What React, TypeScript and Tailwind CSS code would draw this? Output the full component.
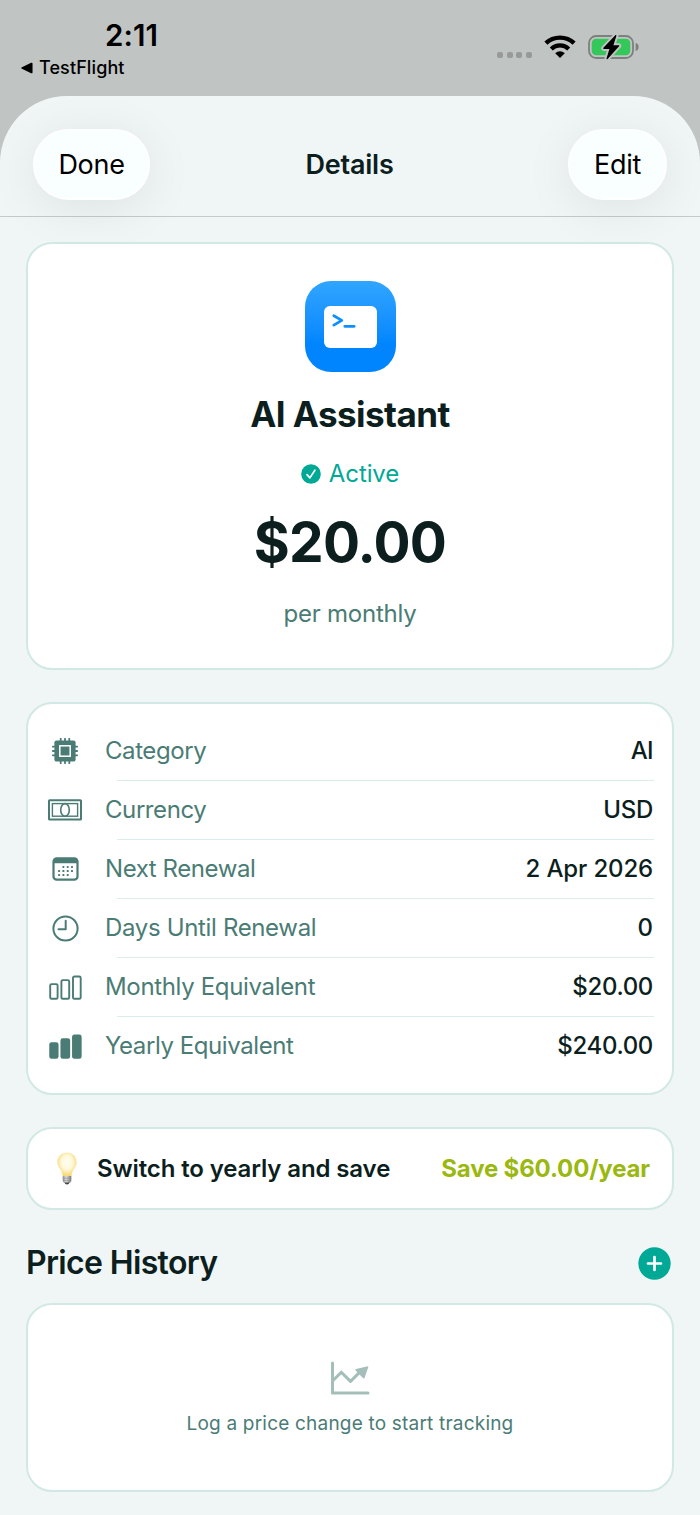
import type { ReactNode } from "react";

interface DetailRow {
  label: string;
  value: string;
  icon: ReactNode;
  labelClass: string;
  valueClass: string;
}

function WifiIcon() {
  return (
    <svg width="32" height="24" viewBox="0 0 32 24" fill="none">
      <path d="M1.900 9.200C9.600 1.700 22.400 1.700 30.100 9.200" stroke="#000" strokeWidth="4.400" />
      <path d="M7.300 14.900c4.900-4.700 12.500-4.700 17.400 0" stroke="#000" strokeWidth="4.200" />
      <path d="M11.200 19.200c2.800-2.700 6.800-2.700 9.600 0L16 24z" fill="#000" />
    </svg>
  );
}

function BatteryIcon() {
  return (
    <svg width="52" height="26" viewBox="0 0 52 26" fill="none">
      <rect x="1" y="2" width="44" height="22" rx="7.200" stroke="#7d807f" strokeWidth="1.800" />
      <path d="M47.600 9c2.200.6 3 2 3 4s-.8 3.400-3 4z" fill="#7d807f" />
      <rect x="3.700" y="4.700" width="38.600" height="16.600" rx="4.600" fill="#34c759" />
      <path
        d="M27.300 1.200 15.400 13.800c-.5.600-.2 1.100.5 1.100h5.500l-2.900 9.500c-.2.800.6 1.100 1.100.5l11.500-12.600c.5-.6.2-1.100-.5-1.100h-5.200l3-9.500c.2-.8-.6-1.100-1.100-.5z"
        fill="#000"
        stroke="#c0c4c3"
        strokeWidth="4"
        paintOrder="stroke"
      />
    </svg>
  );
}

function ChipIcon() {
  const pins = [8.7, 13, 17.3];
  return (
    <svg width="26" height="26" viewBox="0 0 26 26" fill="none" stroke="currentColor">
      {pins.map((p) => (
        <path key={p} d={`M${p} .8v24.400M.8 ${p}h24.400`} strokeWidth="1.800" strokeLinecap="round" />
      ))}
      <rect x="2.400" y="2.400" width="21.200" height="21.200" rx="2.200" fill="currentColor" stroke="none" />
      <rect x="7.800" y="7.800" width="10.400" height="10.400" stroke="#fff" strokeWidth="1.500" />
    </svg>
  );
}

function BanknoteIcon() {
  return (
    <svg width="34" height="22" viewBox="0 0 34 22" fill="none" stroke="currentColor">
      <rect x="1" y="1.200" width="32" height="19.400" rx=".6" strokeWidth="2" />
      <rect x="4.400" y="4.600" width="25.200" height="12.600" strokeWidth="1.400" />
      <ellipse cx="17" cy="10.900" rx="4.300" ry="6.300" strokeWidth="1.600" />
    </svg>
  );
}

function CalendarIcon() {
  const dots = [
    [11.4, 9.9], [15.7, 9.9], [20, 9.9],
    [7.1, 14], [11.4, 14], [15.7, 14], [20, 14],
    [7.1, 18.1], [11.4, 18.1], [15.7, 18.1],
  ];
  return (
    <svg width="27" height="24" viewBox="0 0 27 24" fill="none">
      <rect x="1.500" y="1.300" width="24" height="21.400" rx="3.200" stroke="currentColor" strokeWidth="2.200" />
      <path d="M1.500 6.300V4.500c0-2 1.200-3.200 3.200-3.200h17.600c2 0 3.200 1.200 3.200 3.200v1.800z" fill="currentColor" />
      {dots.map(([x, y]) => (
        <rect key={`${x}-${y}`} x={x - 1} y={y - 1} width="2" height="2" rx=".6" fill="currentColor" />
      ))}
    </svg>
  );
}

function ClockIcon() {
  return (
    <svg width="27" height="27" viewBox="0 0 27 27" fill="none" stroke="currentColor" strokeWidth="2">
      <circle cx="13.500" cy="13.500" r="12.100" />
      <path d="M13.700 5.800v8.400H6.500" strokeLinecap="round" strokeLinejoin="round" />
    </svg>
  );
}

function BarsIcon({ filled }: { filled?: boolean }) {
  return (
    <svg
      width="34"
      height="25"
      viewBox="0 0 34 25"
      fill={filled ? "currentColor" : "none"}
      stroke="currentColor"
      strokeWidth="1.900"
    >
      <rect x="2.200" y="9.100" width="7.400" height="14.700" rx="1.400" />
      <rect x="13.400" y="5.100" width="7.800" height="18.700" rx="1.400" />
      <rect x="25" y="1.500" width="7.700" height="22.300" rx="1.400" />
    </svg>
  );
}

function BulbIcon() {
  return (
    <svg width="20" height="33" viewBox="0 0 20 33" fill="none">
      <defs>
        <radialGradient id="glass" cx=".5" cy=".42" r=".58">
          <stop offset="0" stopColor="#fffdf3" />
          <stop offset=".5" stopColor="#fff8db" />
          <stop offset="1" stopColor="#f8d66a" />
        </radialGradient>
        <linearGradient id="base" x1="0" x2="1" y1="0" y2="0">
          <stop offset="0" stopColor="#8d8d8d" />
          <stop offset=".4" stopColor="#dedede" />
          <stop offset="1" stopColor="#777" />
        </linearGradient>
      </defs>
      <path
        d="M10 .5C4.600.5.400 4.600.400 10c0 3.200 1.300 5.200 2.700 7.300 1.500 2.200 2.300 4 2.500 6.900h8.800c.2-2.900 1-4.700 2.500-6.900 1.400-2.100 2.700-4.100 2.700-7.300C19.600 4.600 15.400.5 10 .5z"
        fill="url(#glass)"
      />
      <path d="M5.700 24.100h8.600v4.400c0 1.500-1.300 2.200-2.200 2.700H7.900c-.9-.5-2.200-1.200-2.200-2.700z" fill="url(#base)" />
      <path d="M5.700 26.300h8.600M6 28.600h8" stroke="#8a8a8a" strokeWidth=".6" />
      <path d="M7.400 30.400h5.200l-1 1.600c-.7.600-2.500.6-3.200 0z" fill="#444" />
    </svg>
  );
}

const rows: DetailRow[] = [
  { label: "Category", value: "AI", icon: <ChipIcon />, labelClass: "tracking-[-0.42px]", valueClass: "tracking-[-0.6px]" },
  { label: "Currency", value: "USD", icon: <BanknoteIcon />, labelClass: "tracking-[-0.42px]", valueClass: "tracking-[-0.3px]" },
  { label: "Next Renewal", value: "2 Apr 2026", icon: <CalendarIcon />, labelClass: "tracking-[-0.42px]", valueClass: "tracking-[-0.15px]" },
  { label: "Days Until Renewal", value: "0", icon: <ClockIcon />, labelClass: "tracking-[-0.34px]", valueClass: "" },
  { label: "Monthly Equivalent", value: "$20.00", icon: <BarsIcon />, labelClass: "tracking-[-0.34px]", valueClass: "tracking-[-0.35px]" },
  { label: "Yearly Equivalent", value: "$240.00", icon: <BarsIcon filled />, labelClass: "tracking-[-0.42px]", valueClass: "tracking-[-0.35px]" },
];

function Card({ className, children }: { className: string; children: ReactNode }) {
  return (
    <section className={`rounded-[26px] border-2 border-[#d2e8e5] bg-white ${className}`}>{children}</section>
  );
}

export default function App() {
  return (
    <div className="flex h-[1515px] w-[700px] flex-col overflow-hidden bg-[#c0c4c3] font-['Inter',sans-serif] text-[#0c1f1e]">
      {/* Status bar */}
      <div className="flex h-24 shrink-0 justify-between pr-[60px] pl-[21px] text-black">
        <div className="flex flex-col pt-[19px]">
          <span className="pl-[84px] text-[29.500px] leading-8 font-semibold tracking-[0.1px]">2:11</span>
          <span className="mt-[5px] flex items-center gap-[6px] text-[18px] leading-6 font-medium tracking-[0.1px]">
            <svg width="12" height="12" viewBox="0 0 13 12">
              <path d="M1 5.200 11 .4c.8-.3 1.500 0 1.500.8v9.600c0 .8-.7 1.100-1.500.8L1 6.800c-.9-.4-.9-1.200 0-1.600z" />
            </svg>
            TestFlight
          </span>
        </div>
        <div className="flex pt-[34px]">
          <div className="mt-[18px] flex gap-[3.700px]">
            {[0, 1, 2, 3].map((i) => (
              <span key={i} className="size-[6px] rounded-[2px] bg-[#979a99]" />
            ))}
          </div>
          <div className="ml-3">
            <WifiIcon />
          </div>
          <div className="ml-3">
            <BatteryIcon />
          </div>
        </div>
      </div>

      {/* Sheet */}
      <div className="flex-1 overflow-hidden rounded-t-[67px] bg-[#f0f6f6]">
        <header className="relative z-10 flex h-[121px] items-center justify-between border-b border-[#c3caca] px-[33px] pt-[16px]">
          <button className="h-[71px] w-[117px] rounded-full border-2 border-white bg-[#f9fefe] pt-[2px] text-[27px] tracking-[-0.3px] text-black shadow-[0_8px_50px_rgba(0,0,0,0.08)]">
            Done
          </button>
          <h1 className="mr-[19px] pt-[2px] text-[27px] font-semibold tracking-[-0.2px]">Details</h1>
          <button className="h-[71px] w-[99px] rounded-full border-2 border-white bg-[#f9fefe] pt-[2px] text-[27px] tracking-[-0.25px] text-black shadow-[0_8px_50px_rgba(0,0,0,0.08)]">
            Edit
          </button>
        </header>

        <main className="flex flex-col px-[26px] pt-[25px]">
          {/* Summary */}
          <Card className="flex h-[428px] flex-col items-center pt-[37px]">
            <div className="flex size-[91px] items-center justify-center rounded-[26px] bg-linear-to-b from-[#30a5ff] to-[#0085ff] to-70%">
              <svg width="53" height="42" viewBox="0 0 53 42" fill="none">
                <rect width="53" height="42" rx="6" fill="#fff" />
                <path
                  d="m9.800 9.800 8 4.600-8 4.700M20.800 20.300h9.400"
                  stroke="#0e8fff"
                  strokeWidth="2.800"
                  strokeLinecap="round"
                  strokeLinejoin="round"
                />
              </svg>
            </div>
            <h2 className="mt-[20px] text-[35px] leading-[44px] font-bold tracking-[-0.55px]">AI Assistant</h2>
            <div className="mt-[22px] flex items-center gap-2 text-[24px] leading-8 tracking-[-0.1px] text-[#00a896]">
              <svg width="20" height="20" viewBox="0 0 20 20" fill="none">
                <circle cx="10" cy="10" r="9.800" fill="currentColor" />
                <path d="m6 10.600 2.900 3.300 5-7.700" stroke="#fff" strokeWidth="1.700" strokeLinecap="round" strokeLinejoin="round" />
              </svg>
              Active
            </div>
            <p className="mt-[20px] text-[55px] leading-[64px] font-bold tracking-[-0.8px]">$20.00</p>
            <p className="mt-[24px] text-[24px] leading-8 tracking-[-0.25px] text-[#4a7c75]">per monthly</p>
          </Card>

          {/* Details */}
          <Card className="mt-8 h-[393px] pt-[18px] pr-[18px] pl-[14px]">
            {rows.map((row, i) => (
              <div key={row.label} className="relative flex h-[59px] items-center pb-px">
                <span className="flex w-[46px] justify-center text-[#4a7c75]">{row.icon}</span>
                <span className={`ml-[17px] flex-1 text-[24px] text-[#4a7c75] ${row.labelClass}`}>{row.label}</span>
                <span className={`mr-px text-[24px] font-medium ${row.valueClass}`}>{row.value}</span>
                {i < rows.length - 1 && <span className="absolute right-0 bottom-0 left-[75px] h-px bg-[#dceeec]" />}
              </div>
            ))}
          </Card>

          {/* Savings tip */}
          <Card className="mt-8 flex h-[83px] items-center pr-[22px] pl-[29px] text-[24px]">
            <BulbIcon />
            <span className="ml-5 flex-1 font-semibold tracking-[-0.12px]">Switch to yearly and save</span>
            <span className="font-bold tracking-[-0.15px] text-[#9ab80f]">Save $60.00/year</span>
          </Card>

          {/* Price history */}
          <div className="mt-[33px] flex h-10 items-center justify-between pr-[3px]">
            <h3 className="text-[32px] font-semibold tracking-[-0.65px]">Price History</h3>
            <button aria-label="Add price change">
              <svg width="33" height="33" viewBox="0 0 33 33" fill="none">
                <circle cx="16.500" cy="16.500" r="16.200" fill="#00a896" />
                <path d="M16.500 10v13M10 16.500h13" stroke="#fff" strokeWidth="2.700" strokeLinecap="round" />
              </svg>
            </button>
          </div>
          <Card className="mt-[20px] flex h-[189px] flex-col items-center pt-[56px]">
            <svg width="40" height="34" viewBox="0 0 40 34" fill="none" className="text-[#a4beba]">
              <path
                d="M2.500 2v30h35.500M3 19.500l8.300-8.300 9.200 9.200 10-10"
                stroke="currentColor"
                strokeWidth="3"
                strokeLinecap="round"
                strokeLinejoin="round"
              />
              <path d="M38 5.200 26 8c-.8.200-.9.900-.4 1.400l7.600 7.800c.6.500 1.200.4 1.400-.4L38.400 5.800c.1-.4 0-.6-.4-.6z" fill="currentColor" />
            </svg>
            <p className="mt-[15px] text-[19px] leading-7 tracking-[0.2px] text-[#4a7c75]">
              Log a price change to start tracking
            </p>
          </Card>
        </main>
      </div>
    </div>
  );
}
